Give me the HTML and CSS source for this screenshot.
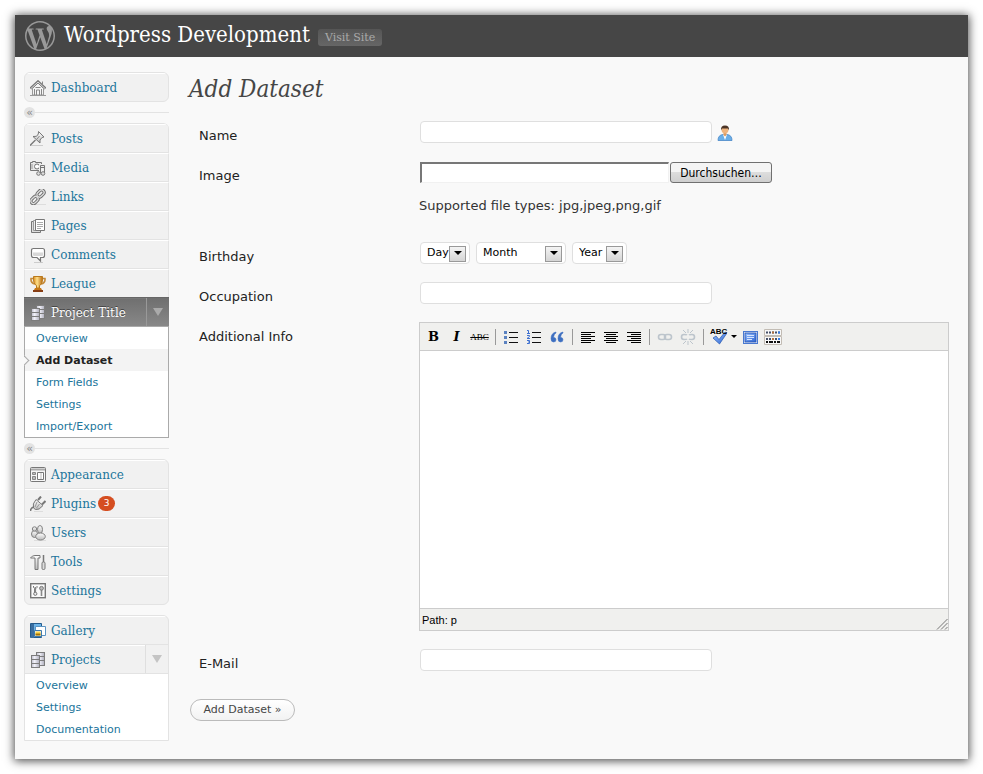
FILE: index.html
```html
<!DOCTYPE html>
<html lang="en">
<head>
<meta charset="utf-8">
<title>Add Dataset - Wordpress Development</title>
<link rel="stylesheet" href="styles.css">
</head>
<body>
<svg class="defs" aria-hidden="true">
  <defs>
    <linearGradient id="metal" x1="0" y1="0" x2="0" y2="1"><stop offset="0" stop-color="#fff"/><stop offset="1" stop-color="#bbb"/></linearGradient>
    <linearGradient id="drawer" x1="0" y1="0" x2="1" y2="0"><stop offset="0" stop-color="#b4b4c0"/><stop offset=".4" stop-color="#f2f2fa"/><stop offset="1" stop-color="#a6a6b4"/></linearGradient>
    <linearGradient id="gold" x1="0" y1="0" x2="1" y2="0"><stop offset="0" stop-color="#d98a1c"/><stop offset=".4" stop-color="#ffe08a"/><stop offset="1" stop-color="#b8690c"/></linearGradient>
    <linearGradient id="blue" x1="0" y1="0" x2="1" y2="1"><stop offset="0" stop-color="#9cc4ff"/><stop offset="1" stop-color="#2a62d0"/></linearGradient>
    <symbol id="stack" viewBox="0 0 16 16">
      <path d="M6 0h9v14H6z" fill="url(#drawer)"/>
      <path d="M6 .5h9M6 4.500h9M6 8.500h9M6 13.500h9M14.500 0v14M6.500 0v3" stroke="#7c7c7c"/>
      <path d="M1 3h9v13H1z" fill="url(#drawer)"/>
      <path d="M1 3.500h9M1 7.500h9M1 11.500h9M1 15.500h9M1.500 3v13M9.500 3v13" stroke="#7c7c7c"/>
    </symbol>
  </defs>
</svg>
<div class="page">
  <header class="top">
    <svg class="logo" viewBox="0 0 24 24" aria-hidden="true"><path fill="#999" d="M21.469 6.825c.84 1.537 1.318 3.3 1.318 5.175 0 3.979-2.156 7.456-5.363 9.325l3.295-9.527c.615-1.54.82-2.771.82-3.864 0-.405-.026-.78-.07-1.11m-7.981.105c.647-.03 1.232-.105 1.232-.105.582-.075.514-.93-.067-.899 0 0-1.755.135-2.88.135-1.064 0-2.85-.15-2.85-.15-.585-.03-.661.855-.075.885 0 0 .54.061 1.125.09l1.68 4.605-2.37 7.08L5.354 6.9c.649-.03 1.234-.1 1.234-.1.585-.075.516-.93-.065-.896 0 0-1.746.138-2.874.138-.2 0-.438-.008-.69-.015C4.911 3.15 8.235 1.215 12 1.215c2.809 0 5.365 1.072 7.286 2.833-.046-.003-.091-.009-.141-.009-1.06 0-1.812.923-1.812 1.914 0 .89.513 1.643 1.06 2.531.411.72.89 1.643.89 2.977 0 .915-.354 1.994-.821 3.479l-1.075 3.585-3.9-11.61.001.014zM12 22.784c-1.059 0-2.081-.153-3.048-.437l3.237-9.406 3.315 9.087c.024.053.05.101.078.149-1.12.393-2.325.609-3.582.609M1.211 12c0-1.564.336-3.05.935-4.39L7.29 21.709C3.694 19.96 1.212 16.271 1.211 12M12 0C5.385 0 0 5.385 0 12s5.385 12 12 12 12-5.385 12-12S18.615 0 12 0"/></svg>
    <a class="site" href="#">Wordpress Development</a>
    <a class="visit" href="#">Visit Site</a>
  </header>
  <div class="body">
    <nav class="menu" aria-label="Main menu">
      <ul class="group">
        <li><a class="item" href="#"><svg class="icon" viewBox="0 0 16 16"><path d="M2.500 8.500v6.500h11V8.500L8 3z" fill="#f4f4f4" stroke="#999"/><path d="M.5 8.500 8 1.500l7.500 7" fill="none" stroke="#777" stroke-width="2.400"/><path d="M1 8.500 8 2l7 6.500" fill="none" stroke="#ddd" stroke-width="1"/><path d="M12.500 1.500v4M6.500 15v-5h3v5M5.500 7.500h5M4.500 9v6M11.500 9v6" fill="none" stroke="#888"/><path d="M0 15.500h16" stroke="#999"/></svg>Dashboard</a></li>
      </ul>
      <div class="sep"><button type="button" aria-label="Collapse menu">«</button></div>
      <ul class="group flush">
        <li><a class="item" href="#"><svg class="icon" viewBox="0 0 16 16"><path d="M0 14.500h13" stroke="#ccc"/><path d="M0 14.500 5.500 9" stroke="#777" stroke-width="1.300"/><path d="M8.500.5 14 6l-2 .5-2 2.500v3L3 5.500l3.500-.2L8.300 3z" fill="url(#metal)" stroke="#777"/><path d="m7 8 2.500-3" stroke="#888"/></svg>Posts</a></li>
        <li><a class="item" href="#"><svg class="icon" viewBox="0 0 16 16"><path d="M.5 2.500h2v-1h3v1h6v8H.5z" fill="#e8e8e8" stroke="#777"/><circle cx="7" cy="6.500" r="2.500" fill="#fff" stroke="#777"/><path d="M2 4v5" stroke="#999"/><path d="M10.500 13V5.500h4V13" fill="none" stroke="#eee" stroke-width="3"/><path d="M10.500 13V5.500h4V13M10.500 7.500h4" fill="none" stroke="#777"/><circle cx="8.500" cy="13.500" r="1.800" fill="#ddd" stroke="#777"/><circle cx="13" cy="13.500" r="1.800" fill="#ddd" stroke="#777"/></svg>Media</a></li>
        <li><a class="item" href="#"><svg class="icon" viewBox="0 0 16 16"><path d="M3 15.500h13" stroke="#ddd"/><g fill="none" stroke="#6f6f6f" stroke-width="3.200"><rect x="6.500" y="2" width="8" height="5" rx="2.500" transform="rotate(-45 10.500 4.500)"/><rect x="0.500" y="8.500" width="8" height="5" rx="2.500" transform="rotate(-45 4.500 11)"/></g><g fill="none" stroke="#dcdcdc" stroke-width="1.300"><rect x="6.500" y="2" width="8" height="5" rx="2.500" transform="rotate(-45 10.500 4.500)"/><rect x="0.500" y="8.500" width="8" height="5" rx="2.500" transform="rotate(-45 4.500 11)"/></g></svg>Links</a></li>
        <li><a class="item" href="#"><svg class="icon" viewBox="0 0 16 16"><path d="M1.500 3.500h9v11h-9z" fill="#ddd" stroke="#777"/><path d="M3.500 2.500h7v10h-7z" fill="#eee" stroke="#999"/><path d="M5.500 1.500h9v11h-9z" fill="#fff" stroke="#777"/><path d="M7 4.500h6M7 6.500h6M7 8.500h6M7 10.500h4" stroke="#aaa"/></svg>Pages</a></li>
        <li><a class="item" href="#"><svg class="icon" viewBox="0 0 16 16"><path d="M4 15.500h9" stroke="#ccc"/><path d="M3.500 1.500h9q2 0 2 2v5q0 2-2 2h-2V14L7 10.500H3.500q-2 0-2-2v-5q0-2 2-2z" fill="#fff" stroke="#777" stroke-width="1.200"/><path d="M3 5.500h10v2.500q0 1-1 1H4q-1 0-1-1z" fill="#d8d8d8"/></svg>Comments</a></li>
        <li><a class="item" href="#"><svg class="icon" viewBox="0 0 16 16"><path d="M4 2.500H1Q.5 7 5 8M12 2.500h3Q15.500 7 11 8" fill="none" stroke="#c48a3a" stroke-width="1.600"/><path d="M3.500.5h9Q13 8 9.500 9.500v2.500h-3V9.500Q3 8 3.500.5z" fill="url(#gold)" stroke="#b9791c"/><path d="M5 12h6l1 2H4z" fill="#c67616"/><path d="M3 14h10v2H3z" fill="#873d14"/></svg>League</a></li>
        <li>
          <div class="row current"><a class="item" href="#"><svg class="icon"><use href="#stack"/></svg>Project Title</a><button class="toggle" type="button" aria-label="Toggle Project Title"></button></div>
          <ul class="sub dark">
            <li><a href="#">Overview</a></li>
            <li class="active"><a href="#">Add Dataset</a></li>
            <li><a href="#">Form Fields</a></li>
            <li><a href="#">Settings</a></li>
            <li><a href="#">Import/Export</a></li>
          </ul>
        </li>
      </ul>
      <div class="sep"><button type="button" aria-label="Collapse menu">«</button></div>
      <ul class="group">
        <li><a class="item" href="#"><svg class="icon" viewBox="0 0 16 16"><rect x=".5" y=".5" width="15" height="14" rx="1" fill="#f7f7f7" stroke="#777"/><path d="M1 2.500h14" stroke="#aaa" stroke-width="2"/><path d="M2.500 5.500h3v2h-3zM2.500 9.500h3v3h-3z" fill="#bbb" stroke="#888"/><path d="M7.500 5.500h6v7h-6z" fill="#fff" stroke="#777"/><path d="M11 6v6" stroke="#bbb"/></svg>Appearance</a></li>
        <li><a class="item" href="#"><svg class="icon" viewBox="0 0 16 16"><path d="M4 15.500h9" stroke="#ddd"/><path d="M.5 15q0-3 3-4" fill="none" stroke="#777" stroke-width="1.500"/><path d="m8 4 3-3.500M12 8.500l3.500-3.500" stroke="#777" stroke-width="2"/><path d="m6 3.500 7 6q-4 5-7.500 4l-2-1.500Q2 8 6 3.500z" fill="url(#metal)" stroke="#777"/><path d="m7 6-2 5M9.500 8 6.500 12" stroke="#999"/></svg>Plugins<span class="badge">3</span></a></li>
        <li><a class="item" href="#"><svg class="icon" viewBox="0 0 16 16"><path d="M4 15.500h12" stroke="#ddd"/><g fill="url(#metal)" stroke="#808080"><ellipse cx="4.500" cy="9" rx="3" ry="3.500"/><circle cx="4.500" cy="4" r="2.200"/><ellipse cx="10" cy="4.500" rx="2.500" ry="4"/><ellipse cx="10.500" cy="11.500" rx="4.800" ry="3.500"/></g></svg>Users</a></li>
        <li><a class="item" href="#"><svg class="icon" viewBox="0 0 16 16"><path d="M.5 4Q2 1.500 5 1.500h5v2.500H8v11.500H5V4H3z" fill="url(#metal)" stroke="#777"/><path d="M13.500 1v7" stroke="#777" stroke-width="1.500"/><rect x="12" y="8" width="3" height="7.500" rx="1.200" fill="#ddd" stroke="#777"/></svg>Tools</a></li>
        <li><a class="item" href="#"><svg class="icon" viewBox="0 0 16 16"><rect x=".7" y=".7" width="14.600" height="14" fill="#fafafa" stroke="#777" stroke-width="1.400"/><path d="M3.500 3v1.500l1 1V10M7 3v1.500l-1 1" fill="none" stroke="#777"/><path d="M5.300 4v6M11.500 6v7" stroke="#888" stroke-width="1.600"/><circle cx="5.300" cy="10.800" r="1.600" fill="#eee" stroke="#777"/><circle cx="11.500" cy="5.300" r="1.900" fill="#bbb" stroke="#777"/></svg>Settings</a></li>
      </ul>
      <ul class="group last">
        <li><a class="item" href="#"><svg class="icon" viewBox="0 0 16 16"><path d="M.5.5h11v14H.5z" fill="#6db4e8" stroke="#245b8d"/><path d="M1 1h3v14H1z" fill="#3a6ea0"/><path d="M5.500 3.500h10v9h-10z" fill="#fff" stroke="#5c94c2"/><path d="M4.500 7.500h7v6h-7z" fill="#e5f0fa" stroke="#3e79ad"/><path d="M5.500 8.500h5v4h-5z" fill="#ffd64a"/><path d="M5.500 10.500h5v2h-5z" fill="#a07208"/></svg>Gallery</a></li>
        <li>
          <div class="row"><a class="item" href="#"><svg class="icon"><use href="#stack"/></svg>Projects</a><button class="toggle" type="button" aria-label="Toggle Projects"></button></div>
          <ul class="sub">
            <li><a href="#">Overview</a></li>
            <li><a href="#">Settings</a></li>
            <li><a href="#">Documentation</a></li>
          </ul>
        </li>
      </ul>
    </nav>
    <main class="content">
      <h1>Add Dataset</h1>
      <form class="form" action="#">
        <div class="field"><label for="name">Name</label>
          <div class="control"><input class="text" id="name" type="text"><svg class="person" viewBox="0 0 16 16" aria-hidden="true"><path d="M1 15.500Q1 10 6 9.500h4Q15 10 15 15.500z" fill="#6aaee8" stroke="#4a88c8" stroke-width=".8"/><path d="M6 9.500h4L8 15z" fill="#fff"/><path d="M6.500 8h3v2L8 11.500 6.500 10z" fill="#dc9a62"/><circle cx="8" cy="5" r="3.400" fill="#efb47e"/><path d="M4 5.500Q3.500.5 8 .5t4 5L11 3.500H5z" fill="#4b3426"/></svg></div></div>
        <div class="field"><label for="image">Image</label>
          <div class="stacked">
            <div class="control"><input class="path" id="image" type="text"><button class="browse" type="button">Durchsuchen…</button></div>
            <p class="hint">Supported file types: jpg,jpeg,png,gif</p>
          </div></div>
        <div class="field"><label for="day">Birthday</label>
          <div class="control selects">
            <span class="select day"><select id="day"><option>Day</option></select></span>
            <span class="select month"><select aria-label="Month"><option>Month</option></select></span>
            <span class="select year"><select aria-label="Year"><option>Year</option></select></span>
          </div></div>
        <div class="field"><label for="occupation">Occupation</label>
          <div class="control"><input class="text" id="occupation" type="text"></div></div>
        <div class="field"><label for="info">Additional Info</label>
          <div class="editor">
            <div class="tools">
              <button type="button" class="bold">B</button><button type="button" class="ital">I</button><button type="button" class="strike">ABC</button><i class="bar"></i>
              <button type="button" aria-label="Bulleted list"><svg viewBox="0 0 16 16"><path d="M6 3.500h9M6 8.500h9M6 13.500h9" stroke="#111"/><path d="M1 2h3v3H1zM1 7h3v3H1zM1 12h3v3H1z" fill="#5b82c0"/></svg></button><button type="button" aria-label="Numbered list"><svg viewBox="0 0 16 16"><path d="M6 3.500h9M6 8.500h9M6 13.500h9" stroke="#111"/><path d="M1 1.500h1.500V4M1 4.500h3M1 6.500h2.500v1L1 9.500h3M1 11.500h2.500v3H1M2 13h1" fill="none" stroke="#3c6fd0"/></svg></button><button type="button" aria-label="Quote"><svg viewBox="0 0 16 16"><path d="M7 3Q2 4 2 9.500 2 13 4.500 13T7 10.700Q7 8.500 4.500 8.300 5 5 7 4zM14 3Q9 4 9 9.500 9 13 11.500 13t2.500-2.300q0-2.200-2.500-2.400Q12 5 14 4z" fill="#3d6fc0" stroke="#3d6fc0" stroke-width=".5"/></svg></button><i class="bar"></i>
              <button type="button" aria-label="Align left"><svg viewBox="0 0 16 16"><path d="M1 3.500h14M1 5.500h10M1 7.500h14M1 9.500h10M1 11.500h14M1 13.500h10" stroke="#000"/></svg></button><button type="button" aria-label="Align center"><svg viewBox="0 0 16 16"><path d="M1 3.500h14M3 5.500h10M1 7.500h14M3 9.500h10M1 11.500h14M3 13.500h10" stroke="#000"/></svg></button><button type="button" aria-label="Align right"><svg viewBox="0 0 16 16"><path d="M1 3.500h14M5 5.500h10M1 7.500h14M5 9.500h10M1 11.500h14M5 13.500h10" stroke="#000"/></svg></button><i class="bar"></i>
              <button type="button" aria-label="Link"><svg viewBox="0 0 16 16"><g fill="none" stroke="#bdc5cc" stroke-width="1.600"><rect x="1.500" y="5.500" width="7" height="5" rx="2.500"/><rect x="7.500" y="5.500" width="7" height="5" rx="2.500"/></g></svg></button><button type="button" aria-label="Unlink"><svg viewBox="0 0 16 16"><g fill="none" stroke="#bdc5cc" stroke-width="1.600"><path d="M7 6Q6.500 5.500 4 5.500T1.500 8 4 10.500t3-.5M9 6q.5-.5 3-.5T14.500 8 12 10.500 9 10"/><path stroke-width="1" d="M8 0v4M3 1l3 3M13 1l-3 3M8 16v-4M3 15l3-3M13 15l-3-3"/></g></svg></button><i class="bar"></i>
              <button type="button" class="spell" aria-label="Check spelling"><span>ABC</span><svg viewBox="0 0 16 16"><path d="m2 9 3-2 3 3.500L14 3l2 1-7.500 11z" fill="url(#blue)" stroke="#2456ae" stroke-width=".7"/></svg></button><button type="button" class="more" aria-label="Languages"></button><button type="button" aria-label="Full screen"><svg viewBox="0 0 16 16"><rect x="1.500" y="2.500" width="14" height="12" fill="#fff" stroke="#4878d0"/><rect x="3" y="4" width="11" height="9" fill="url(#blue)" stroke="#2a58b8"/><path d="M5 6.500h7M5 8.500h7M5 10.500h5" stroke="#d5e4ff"/></svg></button><button type="button" aria-label="Kitchen sink"><svg class="wide" viewBox="0 0 18 16"><path d="M.5.5h17v6H.5zM.5 7.500h17v8H.5z" fill="#f8f8f8" stroke="#c2bcb4"/><path d="M2 3.500h14M2 10h14" stroke="#455069" stroke-width="2" stroke-dasharray="2 1"/><path d="M2 13h14" stroke="#111" stroke-width="2" stroke-dasharray="2 1 4 1"/><path d="M8 3.500h2M8 10h2" stroke="#b4703a" stroke-width="2"/><path d="M14 3.500h2M14 10h2" stroke="#347ce8" stroke-width="2"/></svg></button>
            </div>
            <textarea id="info"></textarea>
            <div class="status"><span>Path: p</span><svg viewBox="0 0 12 12" aria-hidden="true"><path d="M1 11.500 11.500 1M5 11.500 11.500 5M9 11.500l2.500-2.500" stroke="#777"/></svg></div>
          </div></div>
        <div class="field"><label for="email">E-Mail</label>
          <div class="control"><input class="text" id="email" type="text"></div></div>
        <button class="submit" type="submit">Add Dataset »</button>
      </form>
    </main>
  </div>
</div>
</body>
</html>
```

FILE: styles.css
```css
* { box-sizing: border-box; }
body {
  margin: 0;
  padding: 15px;
  background: #fff;
  color: #222;
  font: 13px/16px Verdana, "DejaVu Sans", sans-serif;
}
ul { list-style: none; margin: 0; padding: 0; }
a { color: #21759b; text-decoration: none; }
button, input, select, textarea { margin: 0; padding: 0; font: inherit; color: inherit; }
.defs { position: absolute; width: 0; height: 0; }

.page {
  background: #f9f9f9;
  box-shadow: 0 1px 9px 1px rgba(0, 0, 0, .7);
}
.top {
  display: flex;
  align-items: center;
  height: 42px;
  padding: 0 10px;
  background: #464646;
}
.logo { width: 30px; height: 30px; }
.site {
  margin-left: 9px;
  color: #fff;
  font: 22px/40px Georgia, "DejaVu Serif Condensed", "DejaVu Serif", serif;
  height: 42px;
  white-space: nowrap;
}
.visit {
  margin: 2px 0 0 8px;
  padding: 0 7px;
  border-radius: 3px;
  background: linear-gradient(#555, #666);
  color: #aaa;
  font: 11px/17px Georgia, "DejaVu Serif", serif;
  white-space: nowrap;
}
.body { display: flex; padding: 15px 19px 18px 9px; }

/* Side menu */
.menu { flex: none; width: 145px; }
.group {
  border: 1px solid #e3e3e3;
  border-radius: 6px;
  background: #f1f1f1;
  overflow: hidden;
}
.group.flush { border-width: 1px 0 0; border-radius: 6px 6px 0 0; }
.group.flush > li > .item { border-left: 1px solid #e3e3e3; border-right: 1px solid #e3e3e3; }
.group.last { margin-top: 10px; border-radius: 6px 6px 0 0; }
.group > li + li { border-top: 1px solid #e3e3e3; }
.item {
  display: flex;
  flex: 1;
  align-items: center;
  height: 28px;
  padding-left: 5px;
  border-top: 1px solid #fff;
  font: 12px/26px Georgia, "DejaVu Serif", serif;
  white-space: nowrap;
}
.icon { width: 16px; height: 16px; margin-right: 5px; }
.badge {
  margin-left: 2px;
  width: 17px;
  border-radius: 8px;
  background: #d54e21;
  color: #fff;
  font: 9px/15px Verdana, "DejaVu Sans", sans-serif;
  text-align: center;
}
.row { display: flex; }
.toggle {
  display: flex;
  align-items: center;
  justify-content: center;
  width: 23px;
  border: 0;
  border-left: 1px solid #dfdfdf;
  background: none;
}
.toggle::before {
  content: "";
  border: 5px solid transparent;
  border-top: 8px solid #c4c4c4;
  border-bottom: 0;
}
.current { background: linear-gradient(#6f6f6f, #888); }
.current .item { color: #fff; border-top-color: #777; padding-left: 6px; text-shadow: 0 -1px 0 #444; }
.current .toggle { border-left-color: #999; }
.current .toggle::before { border-top-color: #aaa; }
.group > li:has(.current) { border-top-color: #666; }
.sub { border-top: 1px solid #e3e3e3; background: #fff; }
.sub.dark { border: 1px solid #aaa; }
.sub a { display: block; height: 22px; padding-left: 11px; font-size: 11px; line-height: 24px; }
.sub .active { position: relative; background: #f3f3f3; }
.sub .active a { color: #222; font-weight: bold; }
.sub .active::before {
  content: "";
  position: absolute;
  left: -4px;
  top: 8px;
  width: 6px;
  height: 6px;
  border: solid #aaa;
  border-width: 1px 1px 0 0;
  background: #f9f9f9;
  transform: rotate(45deg);
}
.sep { display: flex; align-items: center; height: 21px; }
.sep::after { content: ""; flex: 1; height: 1px; background: #e3e3e3; }
.sep button {
  width: 11px;
  height: 11px;
  border: 0;
  border-radius: 50%;
  background: #e3e3e3;
  color: #888;
  font-size: 11px;
  line-height: 9px;
}

/* Form */
.content { flex: 1; min-width: 0; padding-left: 20px; }
h1 {
  margin: 0 0 15px;
  color: #464646;
  font: italic 24px/34px Georgia, "DejaVu Serif Condensed", "DejaVu Serif", serif;
}
.form { display: flex; flex-direction: column; gap: 18px; padding-left: 10px; }
.field { display: grid; grid-template-columns: 220px 1fr; align-items: start; }
.field label { padding-top: 8px; line-height: 14px; }
.control { display: flex; align-items: center; height: 22px; padding-left: 1px; }
.text {
  width: 292px;
  height: 22px;
  padding: 0 4px;
  border: 1px solid #dfdfdf;
  border-radius: 4px;
  background: #fff;
}
.person { width: 16px; height: 16px; margin: 2px 0 0 5px; }
.stacked { height: 63px; }
.path {
  width: 249px;
  height: 21px;
  border: solid #f1f1f1;
  border-width: 2px 1px 1px 2px;
  border-top-color: #777;
  border-left-color: #777;
  background: #fff;
}
.browse {
  margin-left: 1px;
  padding-top: 2px;
  height: 21px;
  width: 102px;
  border: 1px solid #707070;
  border-radius: 3px;
  background: linear-gradient(#f4f4f4 50%, #ddd 50%, #cfcfcf);
  color: #000;
  font-family: Tahoma, "DejaVu Sans Condensed", "DejaVu Sans", sans-serif;
  font-size: 12px;
}
.hint { margin: 15px 0 0; color: #333; }
.selects { gap: 6px; }
.select { position: relative; height: 22px; }
.select.day { width: 50px; }
.select.month { width: 90px; }
.select.year { width: 55px; }
.select select {
  appearance: none;
  width: 100%;
  height: 22px;
  padding-left: 6px;
  border: 1px solid #dfdfdf;
  border-radius: 4px;
  background: #fff;
  color: #000;
  font-size: 11px;
}
.select::before {
  content: "";
  position: absolute;
  top: 4px;
  right: 4px;
  width: 15px;
  height: 14px;
  border: 1px solid #999;
  background: linear-gradient(#f4f4f4, #d5d5d5);
  pointer-events: none;
}
.select::after {
  content: "";
  position: absolute;
  top: 9px;
  right: 8px;
  border: 4px solid transparent;
  border-top-color: #000;
  border-bottom: 0;
  pointer-events: none;
}

/* Rich text editor */
.editor { display: flex; flex-direction: column; border: 1px solid #ccc; background: #fff; }
.tools {
  display: flex;
  align-items: center;
  height: 28px;
  padding-left: 2px;
  border-bottom: 1px solid #ccc;
  background: #f0f0ee;
  color: #000;
}
.tools button {
  display: flex;
  align-items: center;
  justify-content: center;
  flex: none;
  width: 23px;
  height: 20px;
  border: 0;
  background: none;
}
.tools svg { width: 16px; height: 16px; }
.tools .wide { width: 18px; }
.tools .bar { flex: none; width: 1px; height: 16px; margin: 0 3px 0 4px; background: #999; }
.tools .bold { font: bold 13px/16px "DejaVu Serif", serif; }
.tools .ital { font: italic bold 13px/16px "DejaVu Serif", serif; }
.tools .strike { font: 9px/16px "Liberation Serif", serif; text-decoration: line-through; }
.tools .spell { position: relative; }
.spell span { position: absolute; top: 1px; left: 3px; font: bold 8px/8px "Liberation Sans", sans-serif; }
.tools .more { width: 8px; }
.more::before { content: ""; border: 3px solid transparent; border-top-color: #000; border-bottom: 0; }
textarea { display: block; width: 100%; height: 257px; border: 0; resize: none; background: #fff; }
.status {
  display: flex;
  align-items: flex-end;
  justify-content: space-between;
  height: 22px;
  border-top: 1px solid #ccc;
  padding-left: 2px;
  background: #f0f0ee;
  color: #000;
  font: 11px/20px "Liberation Sans", sans-serif;
}
.status svg { width: 12px; height: 12px; }
.submit {
  align-self: flex-start;
  margin: 10px 0 0 -9px;
  width: 105px;
  height: 22px;
  border: 1px solid #bbb;
  border-radius: 11px;
  background: linear-gradient(#fff, #f2f2f2);
  color: #464646;
  font-size: 11px;
  white-space: nowrap;
}
```
